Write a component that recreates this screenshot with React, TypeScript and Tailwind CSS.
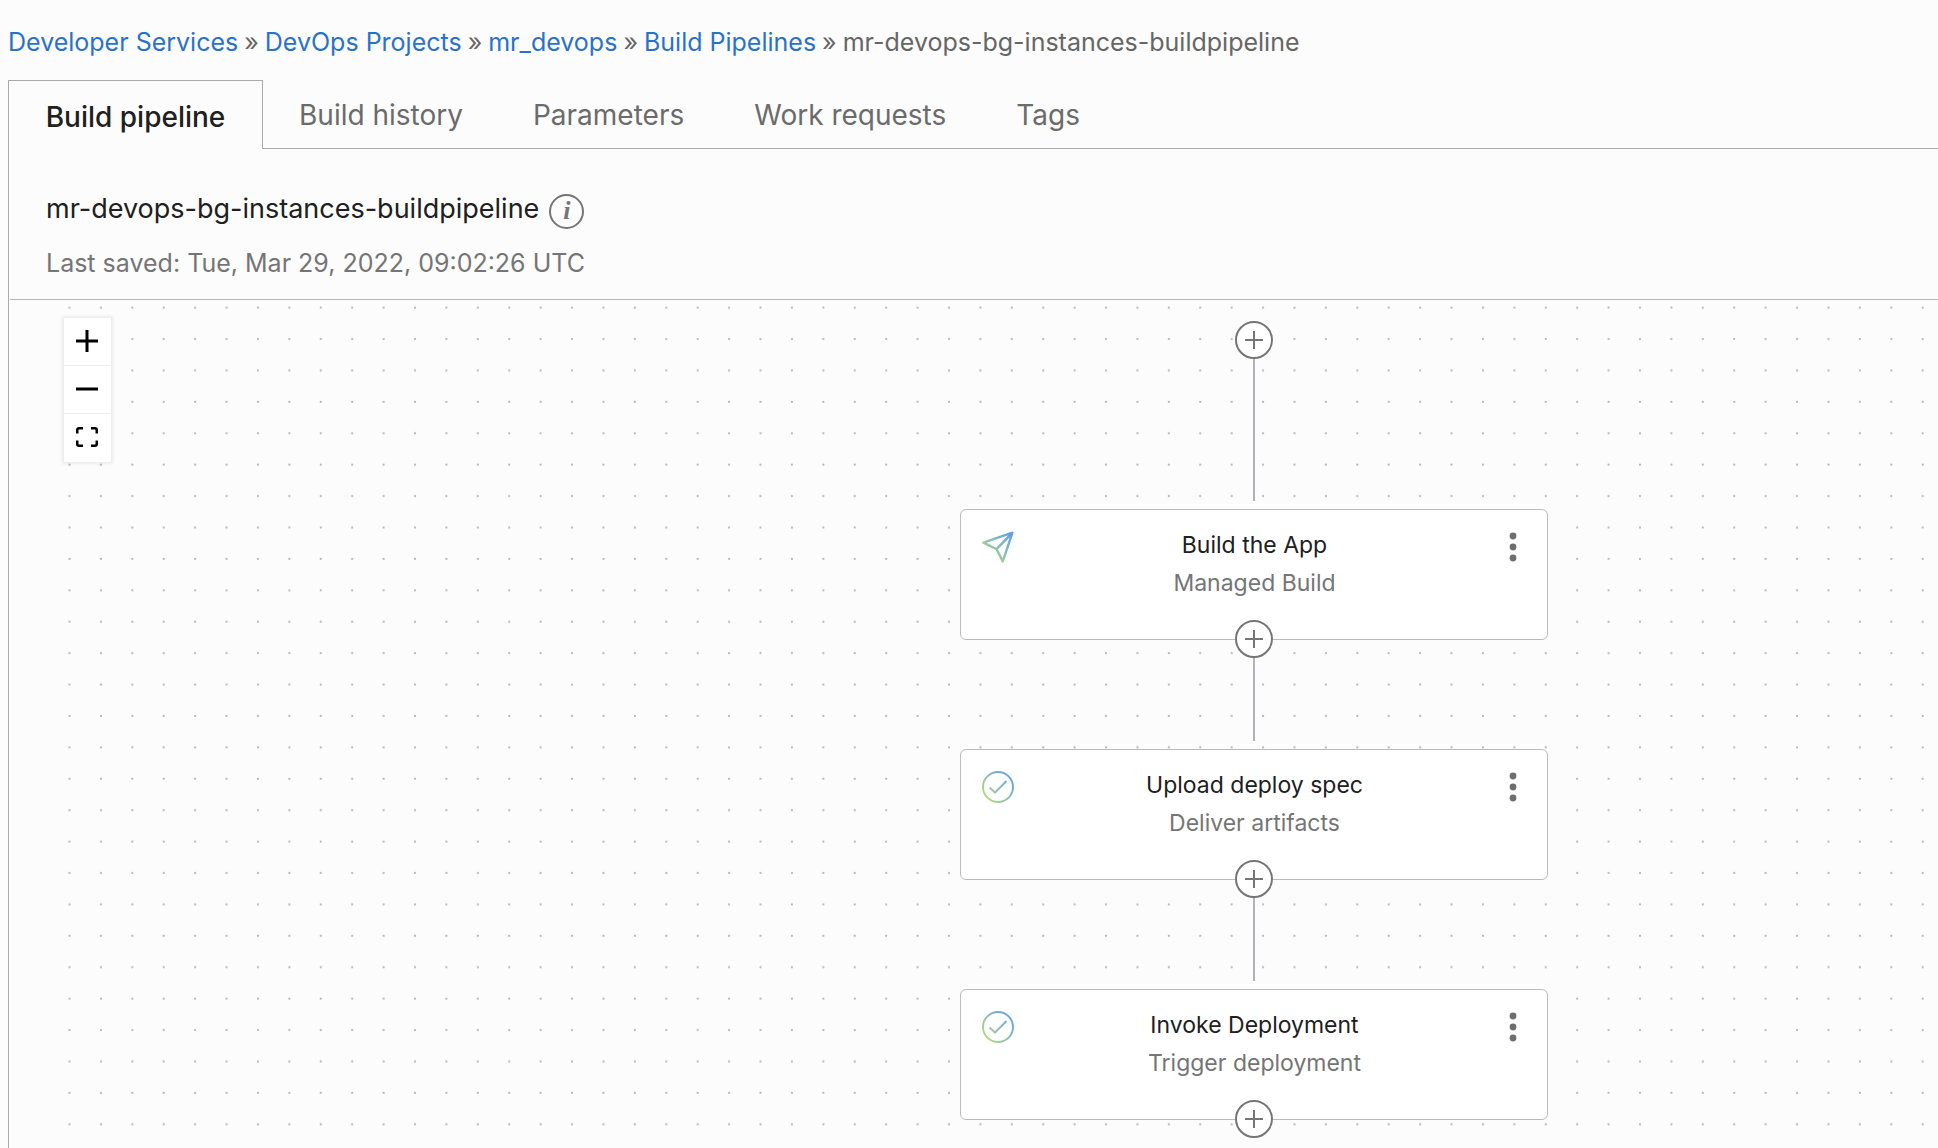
import { useId } from "react";

type Stage = { title: string; kind: string; icon: "send" | "check" };

const crumbs = ["Developer Services", "DevOps Projects", "mr_devops", "Build Pipelines"];
const tabs = ["Build history", "Parameters", "Work requests", "Tags"];
const stages: Stage[] = [
  { title: "Build the App", kind: "Managed Build", icon: "send" },
  { title: "Upload deploy spec", kind: "Deliver artifacts", icon: "check" },
  { title: "Invoke Deployment", kind: "Trigger deployment", icon: "check" },
];

function DotGrid() {
  return (
    <svg className="absolute inset-0 h-full w-full" aria-hidden="true">
      <defs>
        <pattern id="dots" x="44.8" y="-8" width="31.41" height="31.41" patternUnits="userSpaceOnUse">
          <circle cx="15.7" cy="15.7" r="1.1" fill="#b4b4b4" />
        </pattern>
      </defs>
      <rect x="44" y="0" width="100%" height="100%" fill="url(#dots)" />
    </svg>
  );
}

function StageIcon({ icon }: { icon: Stage["icon"] }) {
  const id = useId();
  return (
    <svg className="size-8" viewBox="0 0 32 32" fill="none" stroke={`url(#${id})`} strokeLinejoin="round" aria-hidden="true">
      <defs>
        <linearGradient id={id} x1="4" y1="28" x2="28" y2="4" gradientUnits="userSpaceOnUse">
          <stop offset="0" stopColor="#b3dc7c" />
          <stop offset="1" stopColor="#62a2ea" />
        </linearGradient>
      </defs>
      {icon === "send" ? (
        <path strokeWidth="2.4" d="M30.400 1.600 1.400 11.600l13.200 6.600 6.200 12.200zM30.400 1.600 14.600 18.200" />
      ) : (
        <>
          <circle cx="16" cy="16" r="15" strokeWidth="2" />
          <path strokeWidth="2" d="m7.5 16.500 5.500 5L24.500 10" />
        </>
      )}
    </svg>
  );
}

function AddButton() {
  return (
    <button type="button" aria-label="Add stage" className="relative z-10 flex size-[38px] items-center justify-center rounded-full border-2 border-[#757575] bg-white text-[#757575]">
      <svg className="size-[18px]" viewBox="0 0 18 18" stroke="currentColor" strokeWidth="2" aria-hidden="true">
        <path d="M9 0v18M0 9h18" />
      </svg>
    </button>
  );
}

function StageCard({ stage }: { stage: Stage }) {
  return (
    <article className="grid h-[131px] w-[588px] grid-cols-[48px_1fr_48px] items-start rounded-md border border-[#b9bbc1] bg-white pl-[21px] pr-5 pt-4">
      <div className="pt-[5px]">
        <StageIcon icon={stage.icon} />
      </div>
      <div className="text-center text-[23px] leading-[38px]">
        <h2 className="text-[#202020]">{stage.title}</h2>
        <p className="text-[#757575]">{stage.kind}</p>
      </div>
      <button type="button" aria-label={`Actions for ${stage.title}`} className="flex h-[42px] w-7 items-center justify-center justify-self-end text-[#6e6e6e]">
        <svg className="h-[30px] w-2" viewBox="0 0 8 30" fill="currentColor" aria-hidden="true">
          <circle cx="4" cy="4" r="3.400" />
          <circle cx="4" cy="15" r="3.400" />
          <circle cx="4" cy="26" r="3.400" />
        </svg>
      </button>
    </article>
  );
}

function ZoomControls() {
  const button = "flex h-12 w-[47px] items-center justify-center pb-0.5 pr-px";
  return (
    <div className="absolute left-[55px] top-[18px] divide-y divide-[#eeeeee] bg-white text-black shadow-[0_0_3px_2px_rgba(0,0,0,0.07)]">
      <button type="button" aria-label="Zoom in" className={button}>
        <svg className="size-[22px]" viewBox="0 0 22 22" stroke="currentColor" strokeWidth="3" aria-hidden="true">
          <path d="M11 0v22M0 11h22" />
        </svg>
      </button>
      <button type="button" aria-label="Zoom out" className={button}>
        <svg className="size-[22px]" viewBox="0 0 22 22" stroke="currentColor" strokeWidth="3" aria-hidden="true">
          <path d="M0 11h22" />
        </svg>
      </button>
      <button type="button" aria-label="Fit view" className={button}>
        <svg className="size-[22px]" viewBox="0 0 22 22" fill="none" stroke="currentColor" strokeWidth="2.500" strokeLinejoin="round" aria-hidden="true">
          <path d="M1.250 7.500V4Q1.250 2.250 3 2.250h4M15 2.250h4q1.750 0 1.750 1.750v3.500M20.750 14.500V18q0 1.750-1.750 1.750h-4M7 19.750H3Q1.250 19.750 1.250 18v-3.500" />
        </svg>
      </button>
    </div>
  );
}

export default function App() {
  return (
    <div className="flex min-h-screen flex-col overflow-hidden bg-[#fcfcfc] pl-2 font-['Inter',sans-serif] text-[#757575]">
      <nav aria-label="Breadcrumb" className="flex h-20 items-center gap-1.5 pt-1.5 text-[25px] text-[#666666]">
        {crumbs.map((crumb) => (
          <span key={crumb} className="flex gap-1.5">
            <a href="#" className="text-[#2a72c8]">{crumb}</a>
            <span>»</span>
          </span>
        ))}
        <span>mr-devops-bg-instances-buildpipeline</span>
      </nav>

      <div role="tablist" className="flex h-[69px] text-[28px] leading-9">
        <button type="button" role="tab" aria-selected="true" className="w-[255px] border border-b-0 border-[#a9a9ab] pt-1 font-medium text-[#202020]">
          Build pipeline
        </button>
        <div className="flex flex-1 gap-[70px] border-b border-[#a9a9ab] pl-9 pt-0.5">
          {tabs.map((tab) => (
            <button key={tab} type="button" role="tab" aria-selected="false" className="text-[#6b6b6b]">
              {tab}
            </button>
          ))}
        </div>
      </div>

      <main className="flex flex-1 flex-col border-l border-[#a9a9ab]">
        <header className="ml-px h-[151px] border-b border-[#b5b5bb] pl-9 pt-10">
          <div className="flex items-center gap-[10px]">
            <h1 className="text-[27px] leading-10 text-[#202020]">mr-devops-bg-instances-buildpipeline</h1>
            <button type="button" aria-label="Pipeline information" className="mt-1 flex size-[35px] items-center justify-center rounded-full border-2 border-[#757575] font-['Liberation_Serif',serif] text-[26px] font-bold italic leading-none">
              i
            </button>
          </div>
          <p className="mt-4 text-[25px] leading-9">Last saved: Tue, Mar 29, 2022, 09:02:26 UTC</p>
        </header>

        <section aria-label="Pipeline canvas" className="relative flex-1">
          <DotGrid />
          <ZoomControls />
          <div className="absolute left-[951px] top-[21px] flex flex-col items-center">
            <AddButton />
            <div className="mb-2 h-[142px] w-[2px] bg-[#b1b1b7]" />
            {stages.map((stage, index) => (
              <div key={stage.title} className="flex flex-col items-center">
                <StageCard stage={stage} />
                <div className="-mt-5">
                  <AddButton />
                </div>
                {index < stages.length - 1 && <div className="mb-2 h-[83px] w-[2px] bg-[#b1b1b7]" />}
              </div>
            ))}
          </div>
        </section>
      </main>
    </div>
  );
}
